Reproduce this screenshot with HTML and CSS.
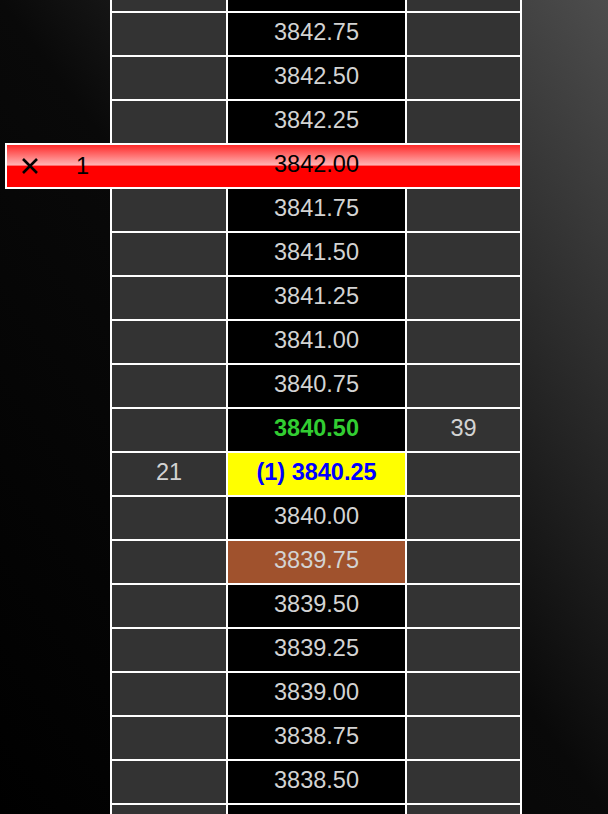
FILE: index.html
```html
<!DOCTYPE html>
<html lang="en">
<head>
  <meta charset="UTF-8" />
  <title>DOM - ES</title>
  <meta name="viewport" content="width=device-width, initial-scale=1.0" />
  <link rel="stylesheet" href="styles.css">
</head>
<body>

  <!-- Price ladder -->
  <div class="dom">
    <table class="ladder">
      <tbody id="ladderBody">
        <tr><td class="bid"></td><td class="price"></td><td class="ask"></td></tr>
        <tr><td class="bid"></td><td class="price">3842.75</td><td class="ask"></td></tr>
        <tr><td class="bid"></td><td class="price">3842.50</td><td class="ask"></td></tr>
        <tr><td class="bid"></td><td class="price">3842.25</td><td class="ask"></td></tr>
        <tr><td class="bid"></td><td class="price"></td><td class="ask"></td></tr>
        <tr><td class="bid"></td><td class="price">3841.75</td><td class="ask"></td></tr>
        <tr><td class="bid"></td><td class="price">3841.50</td><td class="ask"></td></tr>
        <tr><td class="bid"></td><td class="price">3841.25</td><td class="ask"></td></tr>
        <tr><td class="bid"></td><td class="price">3841.00</td><td class="ask"></td></tr>
        <tr><td class="bid"></td><td class="price">3840.75</td><td class="ask"></td></tr>
        <tr><td class="bid"></td><td class="price last">3840.50</td><td class="ask">39</td></tr>
        <tr><td class="bid">21</td><td class="price position">(1) 3840.25</td><td class="ask"></td></tr>
        <tr><td class="bid"></td><td class="price">3840.00</td><td class="ask"></td></tr>
        <tr><td class="bid"></td><td class="price hilite">3839.75</td><td class="ask"></td></tr>
        <tr><td class="bid"></td><td class="price">3839.50</td><td class="ask"></td></tr>
        <tr><td class="bid"></td><td class="price">3839.25</td><td class="ask"></td></tr>
        <tr><td class="bid"></td><td class="price">3839.00</td><td class="ask"></td></tr>
        <tr><td class="bid"></td><td class="price">3838.75</td><td class="ask"></td></tr>
        <tr><td class="bid"></td><td class="price">3838.50</td><td class="ask"></td></tr>
        <tr><td class="bid"></td><td class="price"></td><td class="ask"></td></tr>
      </tbody>
    </table>

    <!-- Working order, drawn over its price row -->
    <div class="order">
      <div class="order-info">
        <svg class="cancel" width="18" height="18" viewBox="0 0 18 18">
          <path d="M2 2 L16 16 M16 2 L2 16" stroke="#000" stroke-width="2.6" fill="none" />
        </svg>
        <span class="qty">1</span>
      </div>
      <div class="order-price">3842.00</div>
      <div></div>
    </div>
  </div>

</body>
</html>
```

FILE: styles.css
```css
body {
  margin: 0;
  height: 100vh;
  overflow: hidden;
  font-family: "Liberation Sans", Arial, sans-serif;
  background: linear-gradient(to bottom left, #4d4d4d 0%, #090909 50%, #000 100%);
}

.dom {
  position: relative;
  display: flow-root;
}

.ladder {
  margin: -33px 0 0 110px;
  background-color: white;
  border-collapse: separate;
  border-spacing: 2px;
  font-size: 23.5px;
  line-height: 26px;
  color: lightgray;
}

.ladder td {
  height: 42px;
  padding: 0 0 4px;
  box-sizing: border-box;
  text-align: center;
  vertical-align: middle;
}

.bid { width: 114px; background-color: #333; }
.price { width: 177px; background-color: #000; }
.ask { width: 113px; background-color: #333; }

.price.last { color: limegreen; font-weight: bold; }
.price.position { background-color: yellow; color: blue; font-weight: bold; }
.price.hilite { background-color: sienna; }

.order {
  position: absolute;
  top: 143px;
  left: 5px;
  width: 517px;
  height: 46px;
  box-sizing: border-box;
  border: 2px solid white;
  background: linear-gradient(#ff2a2a 0%, #ffb4b4 48%, #ff0000 50%);
  display: grid;
  grid-template-columns: 221px 177px 1fr;
  align-items: center;
  font-size: 23.5px;
  line-height: 26px;
  color: black;
}

.order-info {
  display: flex;
  align-items: center;
  padding-left: 14px;
}

.cancel { display: block; }

.qty { margin-left: 37px; }

.order-price {
  text-align: center;
  padding-bottom: 4px;
}
```
